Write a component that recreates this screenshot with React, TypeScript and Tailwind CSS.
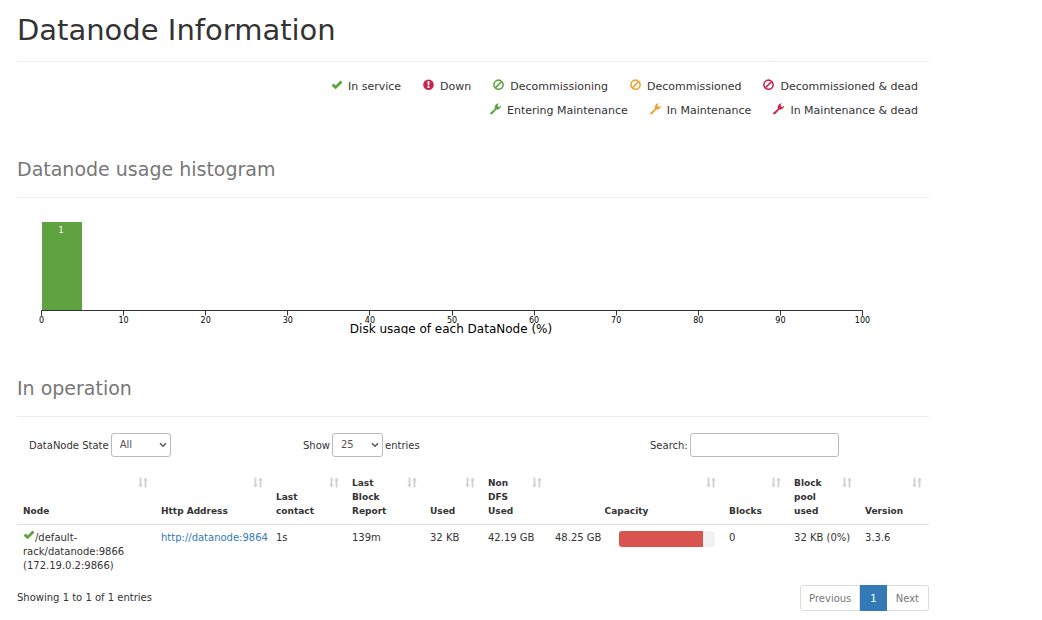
import type { ReactNode } from "react";

const GREEN = "text-[#5fa341]";
const ORANGE = "text-[#eea236]";
const RED = "text-[#c7254e]";

function CheckIcon({ className }: { className: string }) {
  return (
    <svg viewBox="0 0 12 12" className={`h-3 w-3 shrink-0 ${className}`} aria-hidden="true">
      <path d="M0.6 6.8 2.6 4.6 4.7 6.4 9.4 1.6 11.5 3.5 4.7 10.2Z" fill="currentColor" />
    </svg>
  );
}

function DownIcon({ className }: { className: string }) {
  return (
    <svg viewBox="0 0 12 12" className={`h-3 w-3 shrink-0 ${className}`} aria-hidden="true">
      <circle cx="5.5" cy="5.7" r="5.3" fill="currentColor" />
      <path d="M4.4 2.3h2.2l-.4 4.2H4.8zM4.5 7.3h2v1.8h-2z" fill="#fff" />
    </svg>
  );
}

function BanIcon({ className }: { className: string }) {
  return (
    <svg viewBox="0 0 12 12" className={`h-3 w-3 shrink-0 ${className}`} aria-hidden="true">
      <g fill="none" stroke="currentColor" strokeWidth="1.6">
        <circle cx="5.5" cy="5.7" r="4.6" />
        <path d="M2.3 8.9 8.7 2.5" />
      </g>
    </svg>
  );
}

function WrenchIcon({ className }: { className: string }) {
  return (
    <svg viewBox="0 0 12 12" className={`h-3 w-3 shrink-0 ${className}`} aria-hidden="true">
      <path
        d="M0.3 9.7 4.7 6C4.2 3.2 5.6 0.4 8.9 0.2L7.6 2 8 3.4 9.3 3.9 11.2 2.6C11.2 5 9 6.9 6.4 6.6L2.1 11.2C1.2 11.8-0.5 10.6 0.3 9.7Z"
        fill="currentColor"
      />
    </svg>
  );
}

function SortIcon() {
  return (
    <svg viewBox="0 0 10 11" className="h-[11px] w-2.5 shrink-0" aria-hidden="true">
      <path
        d="M1.6 0.5h1.8v7H4.8L2.5 10.5 0.2 7.5h1.4zM6.6 10.5h1.8v-7H9.8L7.5 0.5 5.2 3.5h1.4z"
        fill="#d0d0d0"
      />
    </svg>
  );
}

const legend: { label: string; icon: ReactNode }[] = [
  { label: "In service", icon: <CheckIcon className={GREEN} /> },
  { label: "Down", icon: <DownIcon className={RED} /> },
  { label: "Decommissioning", icon: <BanIcon className={GREEN} /> },
  { label: "Decommissioned", icon: <BanIcon className={ORANGE} /> },
  { label: "Decommissioned & dead", icon: <BanIcon className={RED} /> },
  { label: "Entering Maintenance", icon: <WrenchIcon className={GREEN} /> },
  { label: "In Maintenance", icon: <WrenchIcon className={ORANGE} /> },
  { label: "In Maintenance & dead", icon: <WrenchIcon className={RED} /> },
];

function Histogram() {
  const ticks = [0, 10, 20, 30, 40, 50, 60, 70, 80, 90, 100];
  return (
    <svg
      viewBox="0 0 912 124"
      className="h-auto w-full font-['DejaVu_Sans',sans-serif]"
      role="img"
      aria-label="Disk usage of each DataNode"
    >
      <rect x="25" y="12" width="40" height="88" fill="#5fa341" />
      <text x="44" y="23" fontSize="8" textAnchor="middle" fill="#fff">
        1
      </text>
      <path d="M24.5 105.5V100.5H845.5V105.5" fill="none" stroke="#333" />
      {ticks.map((t) => (
        <g key={t}>
          <path d={`M${Math.round(24 + t * 8.21) + 0.5} 100.5v5`} stroke="#333" />
          <text x={24.5 + t * 8.21} y="113" fontSize="8" textAnchor="middle">
            {t}
          </text>
        </g>
      ))}
      <text x="434" y="123" fontSize="12" textAnchor="middle">
        Disk usage of each DataNode (%)
      </text>
    </svg>
  );
}

function Select({ id, options, width }: { id: string; options: string[]; width: string }) {
  return (
    <span className={`grid items-center ${width}`}>
      <select
        id={id}
        className="col-start-1 row-start-1 h-6 w-full appearance-none rounded-[3px] border border-[#bbb] bg-white px-2 pb-px text-[10px] text-[#555]"
      >
        {options.map((o) => (
          <option key={o}>{o}</option>
        ))}
      </select>
      <svg
        viewBox="0 0 8 6"
        className="pointer-events-none col-start-1 row-start-1 mr-1 h-1.5 w-2 justify-self-end"
        aria-hidden="true"
      >
        <path d="M1 1.2 4 4.3 7 1.2" fill="none" stroke="#555" strokeWidth="1.4" />
      </svg>
    </span>
  );
}

const columns = [
  { name: "Node", label: "w-min self-end" },
  { name: "Http Address", label: "self-end whitespace-nowrap" },
  { name: "Last contact", label: "w-min self-end" },
  { name: "Last Block Report", label: "w-min self-end" },
  { name: "Used", label: "w-min self-end" },
  { name: "Non DFS Used", label: "w-min self-end" },
  { name: "Capacity", label: "flex-1 self-end pr-2 text-center", span: 2 },
  { name: "Blocks", label: "w-min self-end" },
  { name: "Block pool used", label: "w-min self-end" },
  { name: "Version", label: "w-min self-end" },
];

function NodeTable() {
  return (
    <table className="w-full table-fixed border-collapse text-left leading-[14px]">
      <colgroup>
        <col className="w-[138px]" />
        <col className="w-[115px]" />
        <col className="w-[76px]" />
        <col className="w-[78px]" />
        <col className="w-[58px]" />
        <col className="w-[67px]" />
        <col className="w-[64px]" />
        <col className="w-[110px]" />
        <col className="w-[65px]" />
        <col className="w-[71px]" />
        <col className="w-[70px]" />
      </colgroup>
      <thead>
        <tr className="border-b border-[#ddd]">
          {columns.map((c) => (
            <th key={c.name} colSpan={c.span ?? 1} className="p-1.5 text-[9px] font-bold">
              <div className="flex h-[42px] justify-between">
                <span className={c.label}>{c.name}</span>
                <span className="pt-px pr-px">
                  <SortIcon />
                </span>
              </div>
            </th>
          ))}
        </tr>
      </thead>
      <tbody>
        <tr className="align-top">
          <td className="p-1.5">
            <CheckIcon className={`-mt-1 inline align-baseline ${GREEN}`} />
            /default-
            <br />
            rack/datanode:9866
            <br />
            (172.19.0.2:9866)
          </td>
          <td className="p-1.5">
            <a href="http://datanode:9864" className="whitespace-nowrap text-[#337ab7]">
              http://datanode:9864
            </a>
          </td>
          <td className="p-1.5">1s</td>
          <td className="p-1.5">139m</td>
          <td className="p-1.5">32 KB</td>
          <td className="p-1.5">42.19 GB</td>
          <td className="p-1.5">48.25 GB</td>
          <td className="p-1.5 pr-2">
            <div className="h-4 overflow-hidden rounded-[3px] bg-[#f2f2f2]">
              <div className="h-full bg-[#d9534f]" style={{ width: "87.4%" }} />
            </div>
          </td>
          <td className="p-1.5">0</td>
          <td className="p-1.5 whitespace-nowrap">32 KB (0%)</td>
          <td className="p-1.5">3.3.6</td>
        </tr>
      </tbody>
    </table>
  );
}

export default function App() {
  return (
    <main className="bg-white pr-[113px] pl-[17px] font-['DejaVu_Sans',sans-serif] text-[10px] text-[#333]">
      <h1 className="border-b border-[#eee] pt-3 pb-[13px] text-[29px] leading-9">
        Datanode Information
      </h1>
      <ul className="mt-[13px] ml-auto flex max-w-[680px] flex-wrap justify-end gap-x-[22px] pr-[11px] text-[11px] leading-6">
        {legend.map((item) => (
          <li key={item.label} className="flex gap-[5px]">
            <span className="pt-1">{item.icon}</span>
            {item.label}
          </li>
        ))}
      </ul>
      <h2 className="mt-[34px] border-b border-[#eee] pb-4 text-[19px] leading-6 text-[#777]">
        Datanode usage histogram
      </h2>
      <div className="mt-3">
        <Histogram />
      </div>
      <h2 className="mt-[42px] border-b border-[#eee] pb-4 text-[19px] leading-6 text-[#777]">
        In operation
      </h2>
      <div className="mt-4 grid grid-cols-[274fr_347fr_267fr] px-3">
        <div className="flex items-center gap-0.5">
          <label htmlFor="state">DataNode State</label>
          <Select id="state" options={["All", "In service", "Down"]} width="w-[60px]" />
        </div>
        <div className="flex items-center gap-0.5">
          <label htmlFor="count">Show</label>
          <Select id="count" options={["25", "50", "100"]} width="w-[51px]" />
          <span>entries</span>
        </div>
        <div className="flex items-center gap-0.5">
          <label htmlFor="search">Search:</label>
          <input
            id="search"
            type="search"
            className="h-6 w-[149px] rounded-[3px] border border-[#bbb] bg-white px-2"
          />
        </div>
      </div>
      <div className="mt-[13px]">
        <NodeTable />
      </div>
      <div className="mt-1.5 flex items-center justify-between">
        <p className="pb-0.5">Showing 1 to 1 of 1 entries</p>
        <nav aria-label="Table pages" className="flex text-[#777]">
          <button type="button" className="h-[26px] rounded-l-[3px] border border-[#ddd] px-2">
            Previous
          </button>
          <button type="button" className="h-[26px] bg-[#337ab7] px-2.5 text-white">
            1
          </button>
          <button
            type="button"
            className="h-[26px] rounded-r-[3px] border border-l-0 border-[#ddd] px-[9px]"
          >
            Next
          </button>
        </nav>
      </div>
    </main>
  );
}
